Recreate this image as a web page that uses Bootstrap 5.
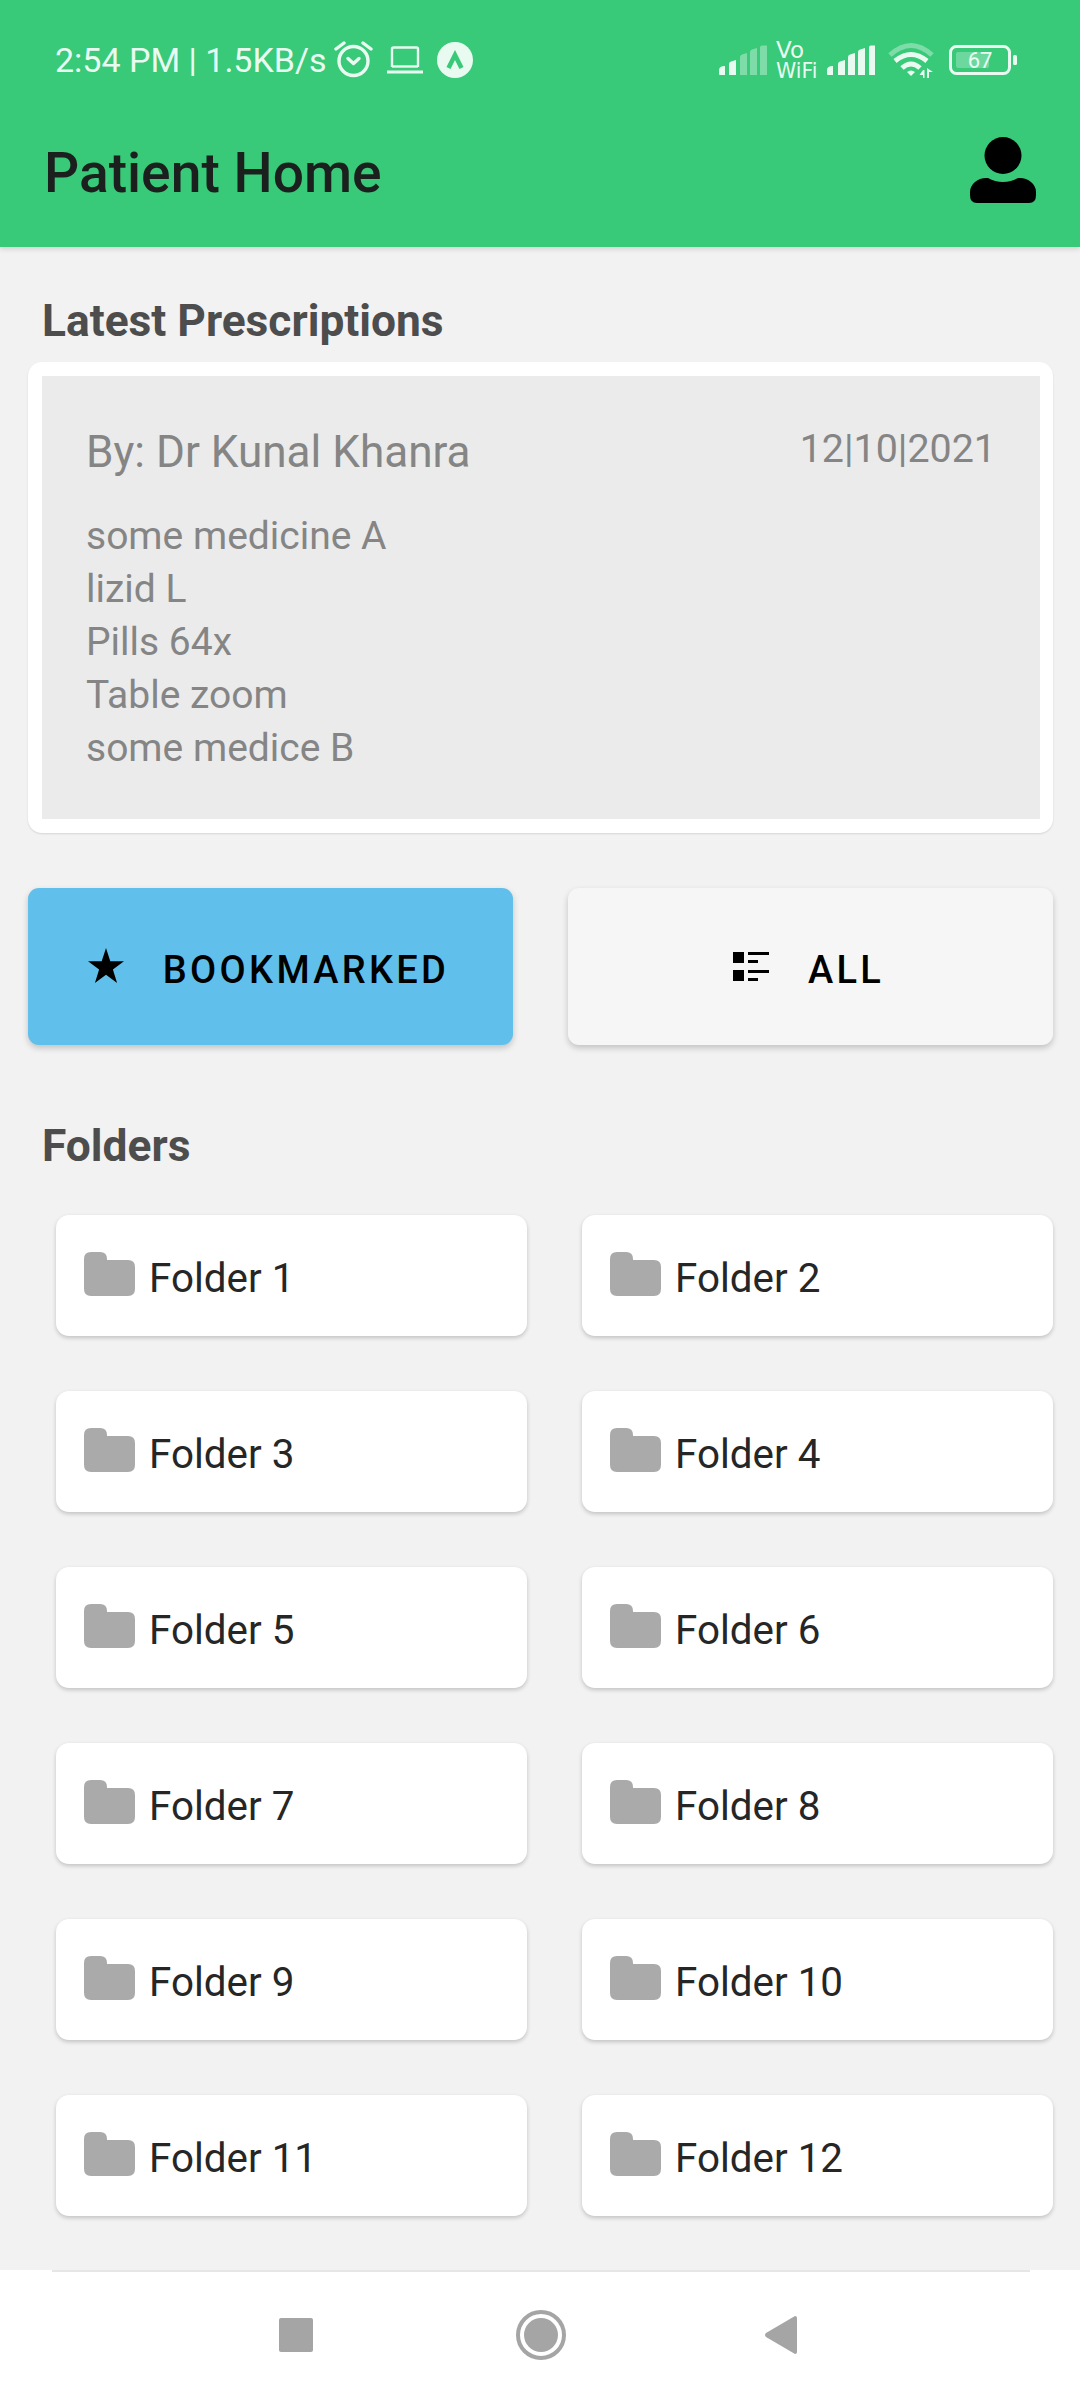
<!DOCTYPE html>
<html lang="en">
<head>
  <meta charset="UTF-8" />
  <meta name="viewport" content="width=device-width, initial-scale=1" />
  <title>Patient Home</title>
  <link href="https://cdn.jsdelivr.net/npm/bootstrap@5.3.3/dist/css/bootstrap.min.css" rel="stylesheet" />
  <style>
    body {
      background-color: #f2f2f2;
      font-family: Roboto, "Liberation Sans", sans-serif;
      width: 1080px;
      height: 2400px;
      overflow: hidden;
    }

    .screen { height: 2400px; }
    .scroll-area { flex: 1 1 0; min-height: 0; overflow: hidden; }

    /* Green header */
    .top-head {
      background-color: #38c979;
      height: 247px;
      box-shadow: 0 2px 5px rgba(0,0,0,.14);
    }
    .status-row {
      height: 120px;
      padding: 0 63px 0 55px;
      color: #e9fbf1;
      font-size: 34px;
    }
    .status-time { width: 279px; white-space: nowrap; line-height: 1; }
    .laptop-ico { margin-left: 13px; }
    .badge-ico { margin-left: 14px; }
    .vo-text {
      font-family: "DejaVu Sans", sans-serif;
      width: 42px;
      margin: 0 9px;
      color: #e9fbf1;
    }
    .vo-top { font-size: 23px; line-height: 21px; }
    .vo-low { font-size: 20.500px; line-height: 20px; }
    .wifi-ico { margin-left: 13px; }
    .batt-ico { margin-left: 13px; }
    .app-row { height: 127px; padding: 0 44px 27px 44px; }
    .app-title { font-size: 55.200px; font-weight: 500; color: #1b1f1d; margin: 0; padding-top: 7px; line-height: 1; }

    /* Section titles */
    .sec-title {
      font-size: 44.300px;
      font-weight: 700;
      color: #4d4d4d;
      line-height: 50px;
      margin: 0 0 0 42px;
    }
    .sec-rx { padding-top: 49px; }
    .sec-folders { margin-top: 76px; }

    /* Prescription card */
    .rx-card {
      margin: 16px 27px 0 28px;
      height: 471px;
      padding: 14px 13px 14px 14px;
      border: 0;
      border-radius: 14px;
      background: #fff;
      box-shadow: 0 1px 2px rgba(0,0,0,.12);
    }
    .rx-inner {
      background: #ebebeb;
      height: 100%;
      padding: 50px 44px 0 44px;
      color: #858585;
    }
    .rx-name { font-size: 44.100px; line-height: 52px; }
    .rx-date { font-size: 39.400px; line-height: 46px; }
    .rx-meds { font-size: 39px; line-height: 53px; margin-top: 32px; }

    /* Two buttons */
    .btn-pair {
      display: grid;
      grid-template-columns: 485px 485px;
      column-gap: 55px;
      margin: 55px 0 0 28px;
    }
    .pick-btn {
      height: 157px;
      border: 0;
      border-radius: 11px;
      padding-right: 16px;
      font-size: 38px;
      font-weight: 500;
      letter-spacing: 3.300px;
      color: #000;
      box-shadow: 0 3px 6px rgba(0,0,0,.2);
    }
    .pick-blue, .pick-blue:hover { background: #60c0eb; color: #000; }
    .pick-grey, .pick-grey:hover { background: #f6f6f6; color: #000; }
    .pick-label { padding-top: 6px; line-height: 1; }
    .star-ico { margin: 0 39px 2px 0; }
    .list-ico { margin-right: 39px; }

    /* Folder cards */
    .folder-grid {
      display: grid;
      grid-template-columns: 471px 471px;
      column-gap: 55px;
      row-gap: 55px;
      margin: 44px 0 0 56px;
    }
    .folder-card {
      height: 121px;
      border: 0;
      border-radius: 13px;
      background: #fff;
      padding-left: 28px;
      box-shadow: 0 2px 4px rgba(0,0,0,.2);
    }
    .folder-ico { margin-bottom: 3px; }
    .folder-name { font-size: 40.400px; color: #262626; margin-left: 14px; line-height: 1; padding-top: 8px; }

    /* Android nav */
    .nav-strip {
      flex: 0 0 130px;
      background: #fff;
      position: relative;
      z-index: 2;
      padding-right: 5px;
    }
    .nav-rule {
      position: absolute;
      top: 0;
      left: 52px;
      width: 978px;
      height: 2px;
      background: #e6e6e6;
    }
    .nav-home { margin: 0 198px 0 203px; }
  </style>
</head>
<body>

  <div class="screen d-flex flex-column">
    <div class="scroll-area">

      <!-- Header -->
      <div class="top-head">
        <div class="status-row d-flex align-items-center">
          <div class="status-time">2:54 PM | 1.5KB/s</div>
          <!-- alarm -->
          <svg width="40" height="38" viewBox="0 0 40 38" fill="none" stroke="#e9fbf1" stroke-width="3.4" stroke-linecap="round" stroke-linejoin="round">
            <circle cx="19.500" cy="20" r="14.500"/>
            <path d="M14 17.500 19.500 22.500 25 17.500"/>
            <path d="M2 8 10 2M29 2 37 8"/>
          </svg>
          <!-- laptop -->
          <svg class="laptop-ico" width="36" height="28" viewBox="0 0 36 28" fill="none" stroke="#e9fbf1" stroke-width="2.4">
            <path d="M5 21V3q0-1.500 1.500-1.500h23q1.500 0 1.500 1.500v18"/>
            <path d="M5 20.500h26"/>
            <path stroke-width="3" d="M0 26h36"/>
          </svg>
          <!-- app badge -->
          <svg class="badge-ico" width="36" height="36" viewBox="0 0 36 36">
            <circle cx="18" cy="18" r="18" fill="#e9fbf1"/>
            <path d="M11.500 26 18 13 24.500 26" fill="none" stroke="#38c979" stroke-width="4.500"/>
          </svg>

          <!-- signal 1 -->
          <svg class="ms-auto" width="48" height="30" viewBox="0 0 48 30" fill="#e9fbf1">
            <path d="M0 29v-4q0-4 6-4v9H1q-1 0-1-1zM10 30V19q0-2 2-2.500L17 15v15z"/>
            <path opacity=".4" d="M21 30V12q0-2 2-2.500L28 8v22zM31 30V7q0-2 2-2.500L38 3v27zM41 30V2.500Q41 .5 43 .5h5V30z"/>
          </svg>
          <div class="vo-text">
            <div class="vo-top">Vo</div>
            <div class="vo-low">WiFi</div>
          </div>
          <!-- signal 2 -->
          <svg width="48" height="30" viewBox="0 0 48 30" fill="#e9fbf1">
            <path d="M0 29v-4q0-4 6-4v9H1q-1 0-1-1zM11 30V19q0-2 2-2.500L18 15v15zM21 30V12q0-2 2-2.500L28 8v22zM31 30V7q0-2 2-2.500L38 3v27zM42 30V2.500Q42 .5 44 .5h4V30z"/>
          </svg>
          <!-- wifi -->
          <svg class="wifi-ico" width="48" height="36" viewBox="0 0 48 36" fill="none" stroke="#e9fbf1">
            <path opacity=".4" stroke-width="5" d="M2 13Q23-6 44 13"/>
            <path stroke-width="5" d="M7 19Q23 6 39 19"/>
            <path stroke-width="5" d="M14 26Q23 18 32 26"/>
            <path fill="#e9fbf1" stroke="none" d="M19 30q4-3 8 0l-4 4zM35 28l-3.500 5H35v3h1.500V28zM39 26v10h2v-6h4z"/>
          </svg>
          <!-- battery -->
          <svg class="batt-ico" width="68" height="30" viewBox="0 0 68 30">
            <rect x="1.500" y="1.500" width="59" height="27" rx="6" fill="none" stroke="#e9fbf1" stroke-width="3"/>
            <rect x="7" y="7" width="33" height="16" rx="2" fill="#e9fbf1" opacity=".3"/>
            <rect x="64" y="10" width="4" height="10" rx="1.500" fill="#e9fbf1"/>
            <text x="31" y="23" text-anchor="middle" font-family="Roboto, sans-serif" font-size="22" fill="#e9fbf1">67</text>
          </svg>
        </div>

        <div class="app-row d-flex align-items-center justify-content-between">
          <h1 class="app-title">Patient Home</h1>
          <!-- person -->
          <svg width="66" height="66" viewBox="0 0 66 66" fill="#000">
            <circle cx="33" cy="18.500" r="18.500"/>
            <path d="M0 58V55C0 47 8 41 16 41h2Q25 45 33 45t15-4h2c8 0 16 6 16 14v3q0 8-7 8H7q-7 0-7-8z"/>
          </svg>
        </div>
      </div>

      <!-- Latest prescription -->
      <h2 class="sec-title sec-rx">Latest Prescriptions</h2>
      <div class="card rx-card">
        <div class="rx-inner">
          <div class="d-flex justify-content-between align-items-start">
            <div class="rx-name">By: Dr Kunal Khanra</div>
            <div class="rx-date">12|10|2021</div>
          </div>
          <div class="rx-meds">
            some medicine A<br>
            lizid L<br>
            Pills 64x<br>
            Table zoom<br>
            some medice B
          </div>
        </div>
      </div>

      <!-- Filter buttons -->
      <div class="btn-pair">
        <button type="button" class="btn pick-btn pick-blue d-flex align-items-center justify-content-center">
          <svg class="star-ico" width="36" height="35" viewBox="0 0 36 35" fill="#000">
            <path d="M18 0l4.300 13.300H36L24.900 21.500 29.100 35 18 26.700 6.900 35l4.200-13.500L0 13.300h13.700z"/>
          </svg>
          <span class="pick-label">BOOKMARKED</span>
        </button>
        <button type="button" class="btn pick-btn pick-grey d-flex align-items-center justify-content-center">
          <svg class="list-ico" width="36" height="30" viewBox="0 0 36 30" fill="#000">
            <path d="M0 0h11v11H0zM15 0h21v3H15zM15 8h10v3H15zM0 18h11v11H0zM15 18h21v3H15zM15 26h10v3H15z"/>
          </svg>
          <span class="pick-label">ALL</span>
        </button>
      </div>

      <!-- Folders -->
      <h2 class="sec-title sec-folders">Folders</h2>
      <div class="folder-grid" id="folderGrid"></div>
    </div>

    <!-- Android nav buttons -->
    <div class="nav-strip d-flex align-items-center justify-content-center">
      <div class="nav-rule"></div>
      <svg width="34" height="34" viewBox="0 0 34 34"><rect width="34" height="34" rx="2" fill="#a5a5a5"/></svg>
      <svg class="nav-home" width="50" height="50" viewBox="0 0 50 50"><circle cx="25" cy="25" r="23" fill="none" stroke="#a5a5a5" stroke-width="4"/><circle cx="25" cy="25" r="17" fill="#a5a5a5"/></svg>
      <svg width="33" height="38" viewBox="0 0 33 38"><path d="M31 0q2 0 2 2v34q0 2-2 2L2 21q-2-2 0-4z" fill="#a5a5a5"/></svg>
    </div>
  </div>

  <script>
    // Build the twelve folder cards
    const folderGrid = document.getElementById("folderGrid");
    for (let i = 1; i <= 12; i++) {
      folderGrid.innerHTML += `
        <div class="card folder-card flex-row align-items-center">
          <svg class="folder-ico" width="51" height="44" viewBox="0 0 51 44" fill="#aaa">
            <path d="M7 0h9q7 0 7 7v1h21q7 0 7 7v22q0 7-7 7H7q-7 0-7-7V7q0-7 7-7z"/>
          </svg>
          <span class="folder-name">Folder ${i}</span>
        </div>
      `;
    }
  </script>

</body>
</html>
